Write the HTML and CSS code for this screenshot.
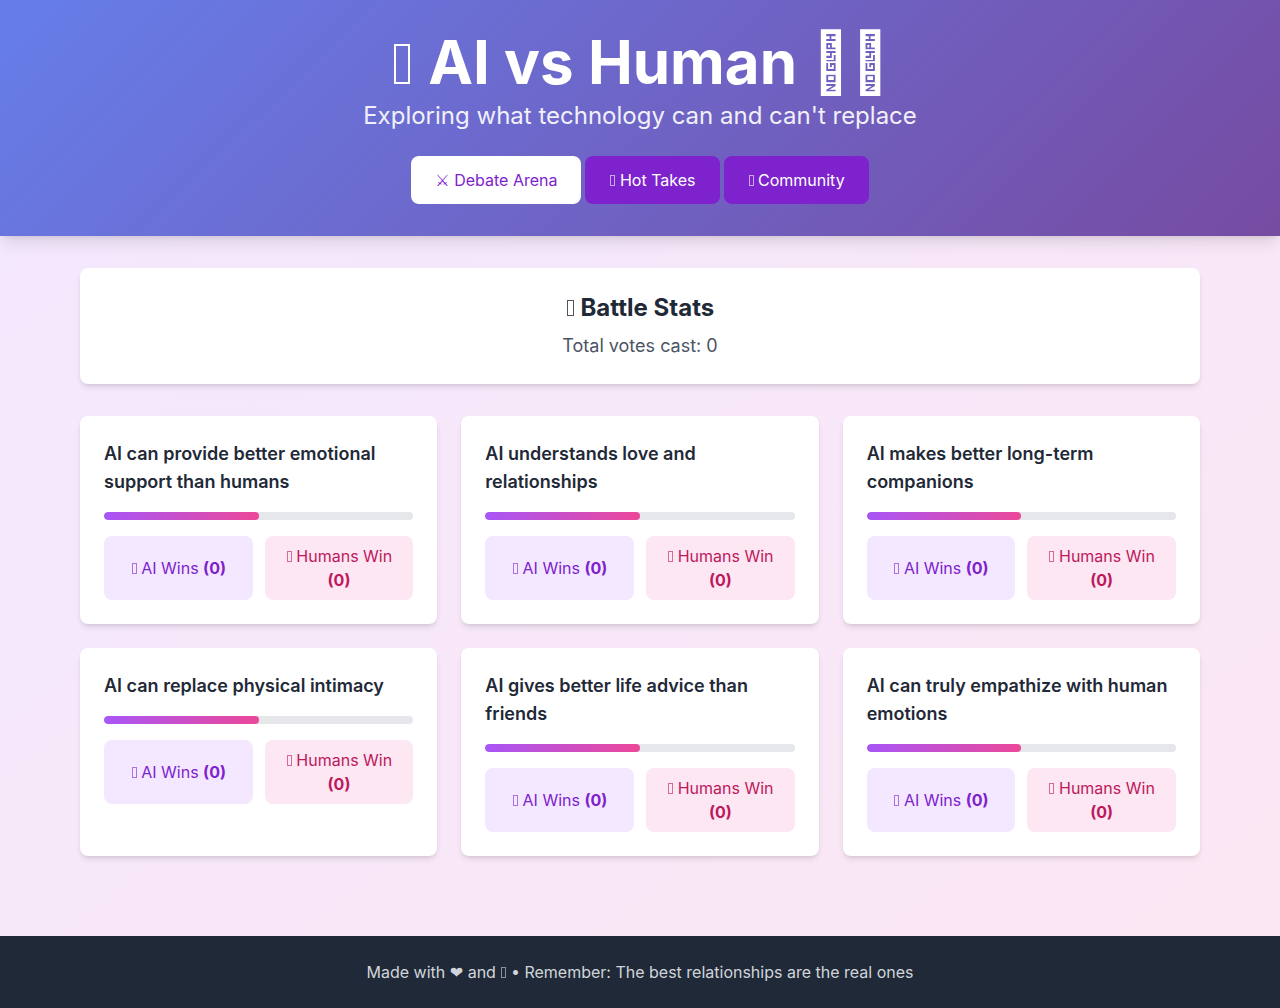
FILE: index.html
```html
<!DOCTYPE html>
<html lang="en">
<head>
    <meta charset="UTF-8">
    <meta name="viewport" content="width=device-width, initial-scale=1.0">
    <title>AI vs Human</title>
    <link rel="stylesheet" href="styles.css">
</head>
<body>
    <header class="header">
        <h1><span class="box"></span> AI vs Human &#xF0000;&#xF0000;</h1>
        <p class="tagline">Exploring what technology can and can't replace</p>
        <nav class="tabs">
            <button type="button" class="tab active"><span class="symbol">⚔</span> Debate Arena</button>
            <button type="button" class="tab"><span class="box"></span> Hot Takes</button>
            <button type="button" class="tab"><span class="box"></span> Community</button>
        </nav>
    </header>

    <main class="container">
        <section class="stats">
            <h2><span class="box"></span> Battle Stats</h2>
            <p>Total votes cast: <span id="totalVotes">0</span></p>
        </section>

        <section class="debates" id="debates">
            <article class="card">
                <h3>AI can provide better emotional support than humans</h3>
                <div class="bar"><div class="bar-fill" style="width: 50%"></div></div>
                <div class="votes">
                    <button type="button" class="vote vote-ai"><span class="box"></span> AI Wins <strong>(0)</strong></button>
                    <button type="button" class="vote vote-human"><span class="box"></span> Humans Win <strong>(0)</strong></button>
                </div>
            </article>
            <article class="card">
                <h3>AI understands love and relationships</h3>
                <div class="bar"><div class="bar-fill" style="width: 50%"></div></div>
                <div class="votes">
                    <button type="button" class="vote vote-ai"><span class="box"></span> AI Wins <strong>(0)</strong></button>
                    <button type="button" class="vote vote-human"><span class="box"></span> Humans Win <strong>(0)</strong></button>
                </div>
            </article>
            <article class="card">
                <h3>AI makes better long-term companions</h3>
                <div class="bar"><div class="bar-fill" style="width: 50%"></div></div>
                <div class="votes">
                    <button type="button" class="vote vote-ai"><span class="box"></span> AI Wins <strong>(0)</strong></button>
                    <button type="button" class="vote vote-human"><span class="box"></span> Humans Win <strong>(0)</strong></button>
                </div>
            </article>
            <article class="card">
                <h3>AI can replace physical intimacy</h3>
                <div class="bar"><div class="bar-fill" style="width: 50%"></div></div>
                <div class="votes">
                    <button type="button" class="vote vote-ai"><span class="box"></span> AI Wins <strong>(0)</strong></button>
                    <button type="button" class="vote vote-human"><span class="box"></span> Humans Win <strong>(0)</strong></button>
                </div>
            </article>
            <article class="card">
                <h3>AI gives better life advice than friends</h3>
                <div class="bar"><div class="bar-fill" style="width: 50%"></div></div>
                <div class="votes">
                    <button type="button" class="vote vote-ai"><span class="box"></span> AI Wins <strong>(0)</strong></button>
                    <button type="button" class="vote vote-human"><span class="box"></span> Humans Win <strong>(0)</strong></button>
                </div>
            </article>
            <article class="card">
                <h3>AI can truly empathize with human emotions</h3>
                <div class="bar"><div class="bar-fill" style="width: 50%"></div></div>
                <div class="votes">
                    <button type="button" class="vote vote-ai"><span class="box"></span> AI Wins <strong>(0)</strong></button>
                    <button type="button" class="vote vote-human"><span class="box"></span> Humans Win <strong>(0)</strong></button>
                </div>
            </article>
        </section>
    </main>

    <footer class="footer">
        <p>Made with <span class="symbol">❤</span> and <span class="box"></span> • Remember: The best relationships are the real ones</p>
    </footer>
</body>
</html>
```
FILE: styles.css
```css
* {
    box-sizing: border-box;
    margin: 0;
    padding: 0;
}

body {
    font-family: 'Inter', sans-serif;
    font-size: 16px;
    line-height: 24px;
    color: #1f2937;
    background: linear-gradient(to bottom right, #f3e8ff, #fce7f3);
    min-height: 100vh;
}

button {
    font: inherit;
    border: none;
    border-radius: 8px;
    cursor: pointer;
}

/* Small outlined box used as the icon in front of labels */
.box {
    display: inline-block;
    width: 5px;
    height: 11px;
    margin-left: 1px;
    border: 1px solid currentColor;
    opacity: 0.6;
}

.symbol {
    font-family: 'DejaVu Sans', sans-serif;
    line-height: 1;
}

/* Header */
.header {
    padding: 32px 16px;
    text-align: center;
    color: white;
    background: linear-gradient(135deg, #667eea 0%, #764ba2 100%);
    box-shadow: 0 10px 15px -3px rgba(0, 0, 0, 0.1), 0 4px 6px -4px rgba(0, 0, 0, 0.1);
}

h1 {
    font-size: 60px;
    line-height: 60px;
    font-weight: 700;
    margin-bottom: 8px;
}

h1 .box {
    width: 16px;
    height: 40px;
    margin: 0 4px;
    border-width: 2px;
    opacity: 1;
}

.tagline {
    font-size: 24px;
    line-height: 32px;
    opacity: 0.9;
}

.tabs {
    display: flex;
    flex-wrap: wrap;
    justify-content: center;
    gap: 4px;
    margin-top: 24px;
}

.tab {
    padding: 12px 24px;
    color: white;
    background: #7e22ce;
}

.tab.active {
    color: #7e22ce;
    background: white;
}

/* Content */
.container {
    max-width: 1152px;
    margin: 0 auto;
    padding: 32px 16px;
}

.stats,
.card {
    padding: 24px;
    background: white;
    border-radius: 8px;
    box-shadow: 0 4px 6px -1px rgba(0, 0, 0, 0.1), 0 2px 4px -2px rgba(0, 0, 0, 0.1);
}

.stats {
    margin-bottom: 32px;
    text-align: center;
}

h2 {
    font-size: 24px;
    line-height: 32px;
    font-weight: 700;
    margin-bottom: 8px;
}

h2 .box {
    width: 7px;
    height: 16px;
    margin: 0 1px;
    opacity: 0.8;
}

.stats p {
    font-size: 18px;
    line-height: 28px;
    color: #4b5563;
}

.debates {
    display: grid;
    grid-template-columns: repeat(3, 1fr);
    gap: 24px;
}

h3 {
    font-size: 18px;
    line-height: 28px;
    font-weight: 600;
    margin-bottom: 16px;
}

.bar {
    height: 8px;
    margin-bottom: 16px;
    background: #e5e7eb;
    border-radius: 4px;
    overflow: hidden;
}

.bar-fill {
    height: 100%;
    border-radius: 4px;
    background: linear-gradient(to right, #a855f7, #ec4899);
}

.votes {
    display: flex;
    gap: 12px;
}

.vote {
    flex: 1;
    padding: 8px 16px;
}

.vote-ai {
    color: #7e22ce;
    background: #f3e8ff;
}

.vote-human {
    color: #be185d;
    background: #fce7f3;
}

/* Footer */
.footer {
    margin-top: 48px;
    padding: 24px 16px;
    text-align: center;
    color: #d1d5db;
    background: #1f2937;
}

@media (max-width: 1023px) {
    .debates {
        grid-template-columns: repeat(2, 1fr);
    }
}

@media (max-width: 640px) {
    .debates {
        grid-template-columns: 1fr;
    }
}
```
